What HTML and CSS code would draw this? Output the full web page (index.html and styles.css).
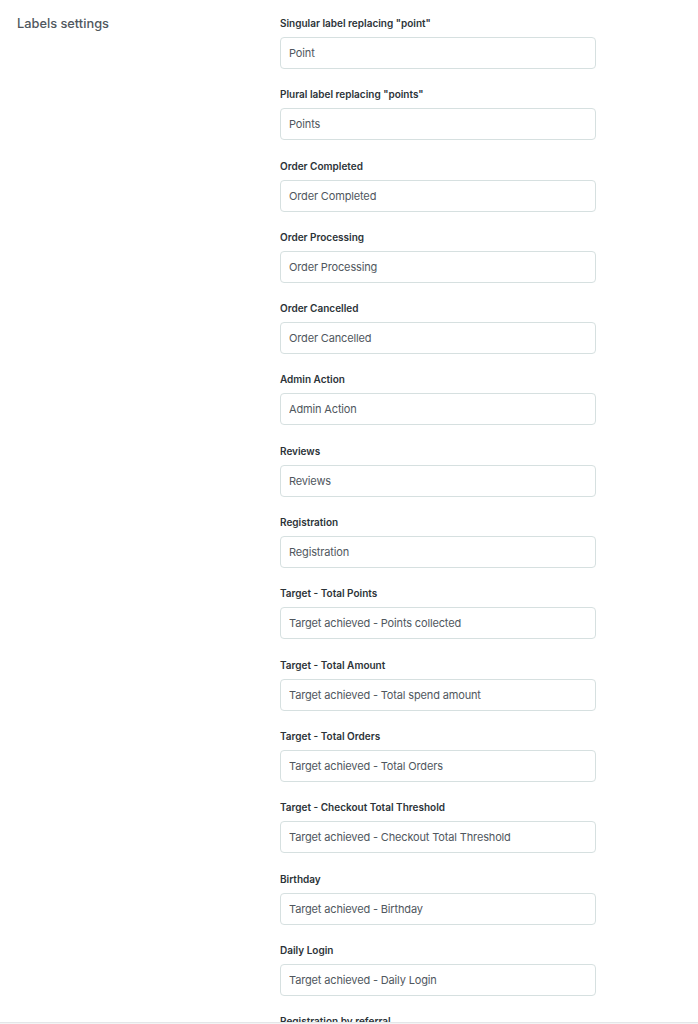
FILE: index.html
```html
<!DOCTYPE html>
<html lang="en">
<head>
    <meta charset="UTF-8">
    <meta name="viewport" content="width=device-width, initial-scale=1.0">
    <title>Labels settings</title>
    <link rel="stylesheet" href="styles.css">
</head>
<body>
    <div class="page">
        <div class="section">
            <h2 class="section-title">Labels settings</h2>
            <div class="fields">
                <div class="field">
                    <label>Singular label replacing "point"</label>
                    <input type="text" value="Point">
                </div>
                <div class="field">
                    <label>Plural label replacing "points"</label>
                    <input type="text" value="Points">
                </div>
                <div class="field">
                    <label>Order Completed</label>
                    <input type="text" value="Order Completed">
                </div>
                <div class="field">
                    <label>Order Processing</label>
                    <input type="text" value="Order Processing">
                </div>
                <div class="field">
                    <label>Order Cancelled</label>
                    <input type="text" value="Order Cancelled">
                </div>
                <div class="field">
                    <label>Admin Action</label>
                    <input type="text" value="Admin Action">
                </div>
                <div class="field">
                    <label>Reviews</label>
                    <input type="text" value="Reviews">
                </div>
                <div class="field">
                    <label>Registration</label>
                    <input type="text" value="Registration">
                </div>
                <div class="field">
                    <label>Target - Total Points</label>
                    <input type="text" value="Target achieved - Points collected">
                </div>
                <div class="field">
                    <label>Target - Total Amount</label>
                    <input type="text" value="Target achieved - Total spend amount">
                </div>
                <div class="field">
                    <label>Target - Total Orders</label>
                    <input type="text" value="Target achieved - Total Orders">
                </div>
                <div class="field">
                    <label>Target - Checkout Total Threshold</label>
                    <input type="text" value="Target achieved - Checkout Total Threshold">
                </div>
                <div class="field">
                    <label>Birthday</label>
                    <input type="text" value="Target achieved - Birthday">
                </div>
                <div class="field">
                    <label>Daily Login</label>
                    <input type="text" value="Target achieved - Daily Login">
                </div>
                <div class="field">
                    <label>Registration by referral</label>
                    <input type="text" value="Target achieved - Registration by referral">
                </div>
            </div>
        </div>
    </div>
</body>
</html>
```

FILE: styles.css
```css
body {
    margin: 0;
    font-family: 'Inter', 'Noto Sans', sans-serif;
    background-color: #f3f4f5;
}
.page {
    height: 1022px;
    overflow: hidden;
    background-color: white;
    border-bottom: 1px solid #e4e6e8;
}
.section {
    display: grid;
    grid-template-columns: 280px 316px;
    padding-top: 16px;
}
.section-title {
    margin: 0;
    padding-left: 17px;
    font-size: 12.8px;
    line-height: 16px;
    font-weight: 500;
    color: #50575e;
}
.fields {
    display: flex;
    flex-direction: column;
    gap: 18.3px;
}
.field label {
    display: block;
    font-size: 10px;
    line-height: 14px;
    font-weight: 600;
    color: #2c3338;
    margin-bottom: 7px;
}
.field input {
    box-sizing: border-box;
    width: 100%;
    height: 32px;
    margin: 0;
    padding: 0 8px;
    border: 1px solid #d6e0e0;
    border-radius: 4px;
    font-family: inherit;
    font-size: 11px;
    letter-spacing: -0.15px;
    color: #50575e;
    background-color: white;
    outline: none;
}
```
